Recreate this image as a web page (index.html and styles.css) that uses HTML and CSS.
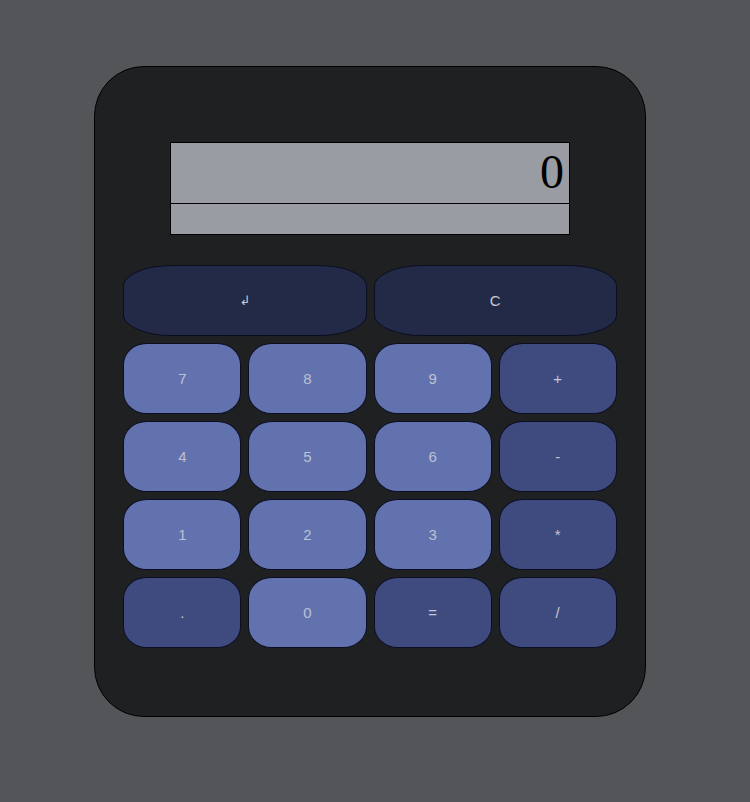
FILE: index.html
```html
<!DOCTYPE html>
<html>
<head>
<meta charset="utf-8">
<link rel="stylesheet" href="styles.css">
</head>
<body>
<div class="calc">
  <div class="display">
    <div class="result">0</div>
    <div class="history"></div>
  </div>
  <div class="keys">
    <button class="key wide">↲</button>
    <button class="key wide">C</button>
    <button class="key num">7</button>
    <button class="key num">8</button>
    <button class="key num">9</button>
    <button class="key op">+</button>
    <button class="key num">4</button>
    <button class="key num">5</button>
    <button class="key num">6</button>
    <button class="key op">-</button>
    <button class="key num">1</button>
    <button class="key num">2</button>
    <button class="key num">3</button>
    <button class="key op">*</button>
    <button class="key op">.</button>
    <button class="key num">0</button>
    <button class="key op">=</button>
    <button class="key op">/</button>
  </div>
</div>
</body>
</html>
```
FILE: styles.css
```css
html, body {
  margin: 0;
  padding: 0;
}
body {
  background: #535558;
  width: 750px;
  height: 802px;
  padding: 66px 0 0 94px;
  box-sizing: border-box;
  font-family: "Liberation Sans", Arial, sans-serif;
}
.calc {
  width: 552px;
  height: 651px;
  box-sizing: border-box;
  border: 1px solid #000;
  border-radius: 50px;
  background: #1f2022;
  padding: 75px 28.3px 0 28.3px;
}
.display {
  width: 400px;
  height: 93px;
  box-sizing: border-box;
  margin-left: 46.7px;
  border: 1px solid #000;
  background: #9a9ca3;
  display: flex;
  flex-direction: column;
}
.result {
  height: 60px;
  border-bottom: 1px solid #000;
  font-family: "Liberation Serif", "Times New Roman", serif;
  font-size: 48px;
  line-height: 58px;
  text-align: right;
  padding-right: 5px;
  color: #000;
}
.history {
  flex: 1;
}
.keys {
  margin-top: 30px;
  display: grid;
  grid-template-columns: repeat(4, 1fr);
  grid-auto-rows: 71px;
  column-gap: 7px;
  row-gap: 7px;
}
.key {
  margin: 0;
  padding: 0;
  border: 1px solid #0b0e22;
  border-radius: 20% / 30%;
  font-family: "Liberation Sans", Arial, sans-serif;
  font-size: 15px;
  color: #bcc0d3;
  cursor: pointer;
}
.wide {
  grid-column: span 2;
  background: #232a47;
  color: #c9cbd4;
}
.wide:first-child {
  font-family: "DejaVu Sans", "Liberation Sans", sans-serif;
  font-size: 13px;
}
.num {
  background: #6272ae;
}
.op {
  background: #3f4b7f;
  color: #c3c7d8;
}
```
